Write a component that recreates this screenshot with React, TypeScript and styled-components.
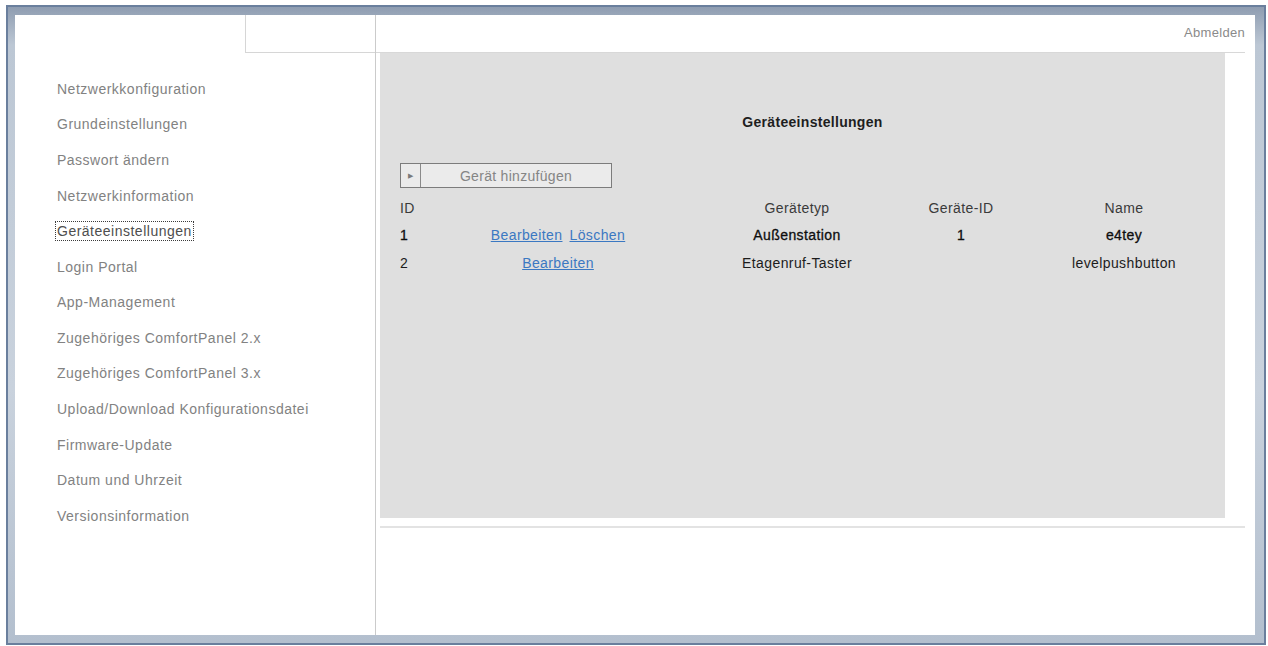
import React from 'react';
import styled, { createGlobalStyle } from 'styled-components';

const GlobalStyle = createGlobalStyle`
    html, body {
        margin: 0;
        padding: 0;
        background: #fff;
        font-family: "Liberation Sans", Arial, sans-serif;
    }
`;

// window frame round the whole admin page
const Frame = styled.div`
    box-sizing: border-box;
    margin: 5px 0 0 6px;
    width: 1260px;
    height: 640px;
    border: 2px solid #6a7f9d;
    padding: 8px 9px 8px 7px;
    background: linear-gradient(180deg, #8f9db1 0%, #bcc7d4 6%, #c9d2dd 60%, #b3bfce 100%);
`;

const Screen = styled.div`
    display: grid;
    grid-template-columns: 361px 1fr;
    height: 620px;
    background: #fff;
`;

const Sidebar = styled.div`
    box-sizing: border-box;
    border-right: 1px solid #cbcbcb;
    display: flex;
    flex-direction: column;
`;

const SideTop = styled.div`
    height: 38px;
    display: flex;
    justify-content: flex-end;
`;

const Tab = styled.div`
    box-sizing: border-box;
    width: 130px;
    border-left: 1px solid #d6d6d6;
    border-bottom: 1px solid #d6d6d6;
`;

const Nav = styled.ul`
    list-style: none;
    margin: 0;
    padding: 18px 0 0 42px;
`;

const NavItem = styled.li`
    height: 35.58px;
    display: flex;
    align-items: center;
`;

const NavLabel = styled.span<{ $active?: boolean }>`
    font-size: 14px;
    letter-spacing: 0.5px;
    line-height: 18px;
    color: ${p => (p.$active ? '#4e4e4e' : '#828282')};
    border: 1px dotted ${p => (p.$active ? '#3c3c3c' : 'transparent')};
    padding: 0 1px;
    margin-left: -2px;
    white-space: nowrap;
`;

const Main = styled.div`
    display: flex;
    flex-direction: column;
`;

const TopBar = styled.div`
    box-sizing: border-box;
    height: 38px;
    margin-right: 10px;
    border-bottom: 1px solid #d8d8d8;
    display: flex;
    justify-content: flex-end;
    align-items: center;
    padding-bottom: 3px;
    font-size: 13px;
    letter-spacing: 0.3px;
    color: #8a8a8a;
`;

const Panel = styled.div`
    box-sizing: border-box;
    margin-left: 4px;
    width: 845px;
    height: 465px;
    background: #dfdfdf;
    padding: 60px 0 0 20px;
`;

const Title = styled.div`
    text-align: center;
    font-size: 14px;
    font-weight: bold;
    letter-spacing: 0.3px;
    line-height: 18px;
    color: #1e1e1e;
    margin-bottom: 32px;
`;

const AddButton = styled.div`
    box-sizing: border-box;
    width: 212px;
    height: 25px;
    display: grid;
    grid-template-columns: 20px 1fr;
    border: 1px solid #7c7c7c;
    background: #ebebeb;
`;

const Arrow = styled.span`
    border-right: 1px solid #8a8a8a;
    display: flex;
    align-items: center;
    justify-content: center;
    font-size: 7px;
    color: #7a7a7a;
`;

const ButtonText = styled.span`
    display: flex;
    align-items: center;
    justify-content: center;
    font-size: 14px;
    letter-spacing: 0.3px;
    color: #858585;
`;

const Table = styled.div`
    margin-top: 6px;
    display: grid;
    grid-template-columns: 20px 276px 202px 126px 200px;
    grid-auto-rows: 28px;
    grid-template-rows: 27px;
    align-items: center;
`;

const Cell = styled.div<{ $head?: boolean; $strong?: boolean; $left?: boolean }>`
    text-align: ${p => (p.$left ? 'left' : 'center')};
    font-size: 14px;
    letter-spacing: 0.4px;
    white-space: nowrap;
    color: ${p => (p.$head ? '#3a3a3a' : p.$strong ? '#0e0e0e' : '#1c1c1c')};
    -webkit-text-stroke: ${p => (p.$strong ? '0.3px #0e0e0e' : '0')};
`;

const Link = styled.a`
    color: #3b78c2;
    text-decoration: underline;
    -webkit-text-stroke: 0;
    cursor: pointer;
    & + & {
        margin-left: 7px;
    }
`;

const Rule = styled.div`
    margin: 8px 10px 0 4px;
    height: 2px;
    background: #e3e3e3;
`;

const menu = [
    'Netzwerkkonfiguration',
    'Grundeinstellungen',
    'Passwort ändern',
    'Netzwerkinformation',
    'Geräteeinstellungen',
    'Login Portal',
    'App-Management',
    'Zugehöriges ComfortPanel 2.x',
    'Zugehöriges ComfortPanel 3.x',
    'Upload/Download Konfigurationsdatei',
    'Firmware-Update',
    'Datum und Uhrzeit',
    'Versionsinformation',
];

const devices = [
    { id: '1', links: ['Bearbeiten', 'Löschen'], type: 'Außenstation', devId: '1', name: 'e4tey', strong: true },
    { id: '2', links: ['Bearbeiten'], type: 'Etagenruf-Taster', devId: '', name: 'levelpushbutton', strong: false },
];

const App = () => {
    return (
        <>
            <GlobalStyle />
            <Frame>
                <Screen>
                    <Sidebar>
                        <SideTop>
                            <Tab />
                        </SideTop>
                        <Nav>
                            {menu.map(item => (
                                <NavItem key={item}>
                                    <NavLabel $active={item === 'Geräteeinstellungen'}>{item}</NavLabel>
                                </NavItem>
                            ))}
                        </Nav>
                    </Sidebar>
                    <Main>
                        <TopBar>Abmelden</TopBar>
                        <Panel>
                            <Title>Geräteeinstellungen</Title>
                            <AddButton>
                                <Arrow>▶</Arrow>
                                <ButtonText>Gerät hinzufügen</ButtonText>
                            </AddButton>
                            <Table>
                                <Cell $head $left>ID</Cell>
                                <Cell $head />
                                <Cell $head>Gerätetyp</Cell>
                                <Cell $head>Geräte-ID</Cell>
                                <Cell $head>Name</Cell>
                                {devices.map(d => (
                                    <React.Fragment key={d.id}>
                                        <Cell $left $strong={d.strong}>{d.id}</Cell>
                                        <Cell>
                                            {d.links.map(l => <Link key={l}>{l}</Link>)}
                                        </Cell>
                                        <Cell $strong={d.strong}>{d.type}</Cell>
                                        <Cell $strong={d.strong}>{d.devId}</Cell>
                                        <Cell $strong={d.strong}>{d.name}</Cell>
                                    </React.Fragment>
                                ))}
                            </Table>
                        </Panel>
                        <Rule />
                    </Main>
                </Screen>
            </Frame>
        </>
    );
};

export default App;
